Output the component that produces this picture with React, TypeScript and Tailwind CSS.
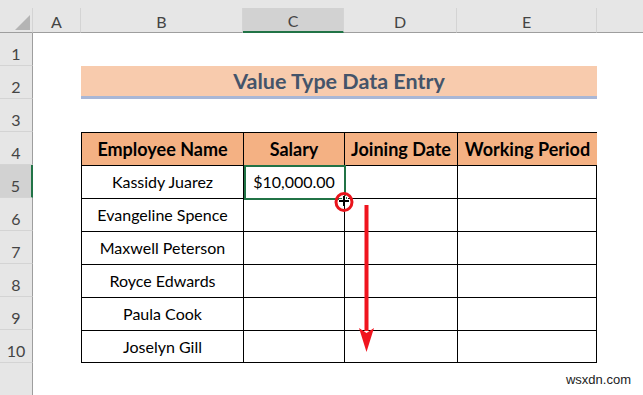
import React from 'react';

const colHeaders = [
  { key: 'A', cls: 'w-[48px] border-r border-[#d4d4d4] border-b border-b-[#9e9e9e]' },
  { key: 'B', cls: 'w-[162px] border-r border-[#d4d4d4] border-b border-b-[#9e9e9e]' },
  { key: 'C', cls: 'w-[101px] border-r border-[#d4d4d4] bg-[#d2d2d2] border-b-2 border-b-[#217346]' },
  { key: 'D', cls: 'w-[113px] border-r border-[#d4d4d4] border-b border-b-[#9e9e9e]' },
  { key: 'E', cls: 'w-[140px] border-r border-[#d4d4d4] border-b border-b-[#9e9e9e]' },
  { key: '', cls: 'flex-1 border-b border-b-[#9e9e9e]' },
];

const employees = [
  'Kassidy Juarez',
  'Evangeline Spence',
  'Maxwell Peterson',
  'Royce Edwards',
  'Paula Cook',
  'Joselyn Gill',
];

const headers = ['Employee Name', 'Salary', 'Joining Date', 'Working Period'];

// plain black cell, borders drawn left/top so lines land on the column edges
const cell = 'flex items-center justify-center border-l border-t border-black';

export default function App() {
  return (
    <div className="relative w-[643px] h-[395px] overflow-hidden bg-white font-['Lato','Noto_Sans',sans-serif] text-black">
      {/* strip above the column letters */}
      <div className="h-[8px] bg-[#e6e6e6]" />

      {/* column letters */}
      <div className="flex h-[25px] bg-[#e6e6e6] text-[16px] text-[#444]">
        <div className="relative w-[33px] border-r border-[#d4d4d4] border-b border-b-[#9e9e9e]">
          <svg className="absolute left-[15px] top-[7px]" width="15" height="15" viewBox="0 0 15 15">
            <polygon points="15,0 15,15 0,15" fill="#b4b4b4" />
          </svg>
        </div>
        {colHeaders.map((c, i) => (
          <div key={i} className={`flex items-center justify-center pt-[3px] ${c.cls}`}>
            {c.key}
          </div>
        ))}
      </div>

      <div className="flex">
        {/* row numbers */}
        <div className="w-[33px] h-[362px] bg-[#e6e6e6] text-[16px] text-[#444]">
          {Array.from({ length: 10 }, (_, i) => (
            <div
              key={i}
              className={
                i === 4
                  ? 'flex h-[33px] items-center justify-center pt-[9px] border-b border-[#d4d4d4] bg-[#d2d2d2] border-r-2 border-r-[#217346]'
                  : 'flex h-[33px] items-center justify-center pt-[9px] border-b border-[#d4d4d4] border-r border-r-[#9e9e9e]'
              }
            >
              {i + 1}
            </div>
          ))}
          <div className="h-[32px] border-r border-[#9e9e9e]" />
        </div>

        {/* sheet */}
        <div className="grid flex-1 grid-cols-[48px_162px_101px_113px_140px] grid-rows-[repeat(10,33px)]">
          <div className="col-start-2 col-span-4 row-start-2 flex items-center justify-center bg-[#f8cbad] border-b-[3px] border-[#a9b7d6] text-[21.5px] font-bold text-[#44546a]">
            Value Type Data Entry
          </div>

          <div className="col-start-2 col-span-4 row-start-4 row-span-7 grid grid-cols-[162px_101px_113px_140px] grid-rows-[repeat(7,33px)] border-r border-b border-black text-[16px]">
            {headers.map(h => (
              <div key={h} className={`${cell} bg-[#f4b183] font-bold text-[18px]`}>
                {h}
              </div>
            ))}
            {employees.map((name, i) => (
              <React.Fragment key={name}>
                <div className={cell}>{name}</div>
                <div className={`${cell} relative`}>
                  {i === 0 && (
                    <>
                      $10,000.00
                      <div className="absolute left-0 -top-[1px] z-10 w-[102px] h-[35px] border-2 border-[#217346]" />
                      <div className="absolute -right-[4px] -bottom-[4px] z-10 w-[6px] h-[6px] bg-[#217346] border border-white" />
                    </>
                  )}
                </div>
                <div className={cell} />
                <div className={cell} />
              </React.Fragment>
            ))}
          </div>
        </div>
      </div>

      {/* fill handle cursor, circle and drag arrow */}
      <svg className="pointer-events-none absolute left-0 top-0 z-20" width="643" height="395" viewBox="0 0 643 395">
        <ellipse cx="344" cy="202" rx="8" ry="8.5" fill="none" stroke="#e8141b" strokeWidth="3" />
        <path d="M344 196 V206 M339 201 H349" stroke="#fff" strokeWidth="4" />
        <path d="M344 196 V206 M339 201 H349" stroke="#000" strokeWidth="2" />
        <rect x="364.5" y="205" width="4" height="126" fill="#f0141e" />
        <polygon points="359,328 366.5,333 374,328 366.5,352" fill="#f0141e" />
      </svg>

      <div className="absolute right-[12px] bottom-[6px] font-['Liberation_Sans',Arial,sans-serif] text-[13px] text-[#222]">
        wsxdn.com
      </div>
    </div>
  );
}
